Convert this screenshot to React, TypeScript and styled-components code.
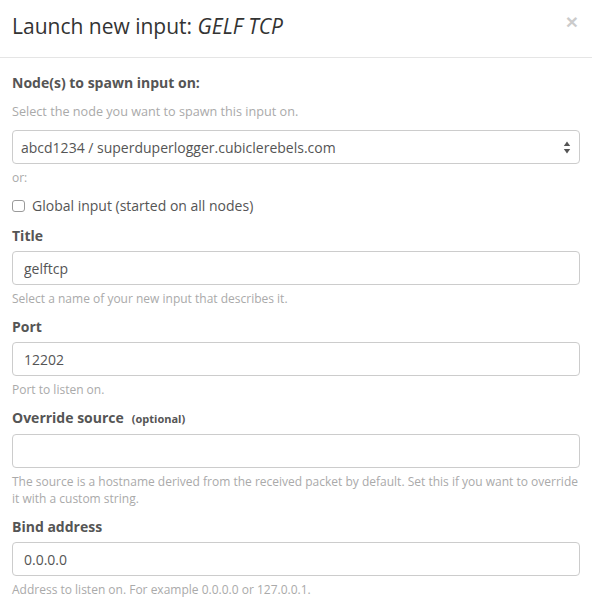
import React from "react";
import styled, { createGlobalStyle } from "styled-components";

const GlobalStyle = createGlobalStyle`
  html, body { margin: 0; padding: 0; background: #fff; }
  body { font-family: "Open Sans", "Noto Sans", sans-serif; color: #555; }
  * { box-sizing: border-box; }
`;

const Modal = styled.div`
  width: 592px;
  background: #fff;
`;

const Header = styled.div`
  display: flex;
  align-items: flex-start;
  justify-content: space-between;
  padding: 11px 12px 15px 12px;
  border-bottom: 1px solid #e5e5e5;
`;

const Title = styled.h4`
  margin: 0;
  font-size: 21px;
  font-weight: 400;
  line-height: 31px;
  color: #333;
  em { font-style: italic; }
`;

const Close = styled.button`
  border: 0;
  background: none;
  padding: 0;
  margin: 0 2px 0 0;
  font-family: "Liberation Sans", Arial, sans-serif;
  font-size: 21px;
  font-weight: 700;
  line-height: 1;
  color: #000;
  opacity: 0.2;
  cursor: pointer;
`;

const Body = styled.form`
  display: flex;
  flex-direction: column;
  gap: 10px;
  padding: 15px 12px 0 12px;
`;

const Field = styled.div`
  display: flex;
  flex-direction: column;
`;

const Label = styled.label`
  font-size: 14px;
  font-weight: 700;
  line-height: 20px;
  margin-bottom: 5px;
  color: #555;
`;

const Optional = styled.small`
  font-size: 11px;
  font-weight: 700;
  margin-left: 8px;
`;

const Help = styled.span<{ $wide?: boolean }>`
  display: block;
  font-size: ${(p) => (p.$wide ? "12.65px" : "12px")};
  line-height: 17px;
  color: #aaa;
  margin-top: 5px;
`;

const TextInput = styled.input`
  height: 34px;
  width: 100%;
  padding: 6px 11px;
  font-family: "Open Sans", sans-serif;
  font-size: 14px;
  color: #555;
  border: 1px solid #ccc;
  border-radius: 4px;
  background: #fff;
  outline: none;
`;

const SelectBox = styled.div`
  height: 34px;
  display: flex;
  align-items: center;
  padding: 0 8px;
  border: 1px solid #ccc;
  border-radius: 4px;
  font-size: 14px;
  color: #555;
  background: #fff;
`;

const SelectValue = styled.span`
  flex: 1;
`;

const CheckRow = styled.label`
  display: flex;
  align-items: center;
  gap: 7px;
  height: 20px;
  font-size: 14px;
  line-height: 20px;
  color: #555;
`;

const Check = styled.input`
  appearance: none;
  margin: 0;
  width: 13px;
  height: 12px;
  border: 1px solid #9a9a9a;
  border-radius: 3px;
  background: #fff;
`;

const Arrows = () => (
  <svg width="8" height="13" viewBox="0 0 8 13">
    <path d="M4 0.5 L7.2 5 L0.8 5 Z" fill="#555" />
    <path d="M4 12.5 L7.2 8 L0.8 8 Z" fill="#555" />
  </svg>
);

export default function App() {
  return (
    <Modal>
      <GlobalStyle />
      <Header>
        <Title>
          Launch new input: <em>GELF TCP</em>
        </Title>
        <Close type="button" aria-label="Close">×</Close>
      </Header>
      <Body>
        <Field>
          <Label>Node(s) to spawn input on:</Label>
          <Help $wide>Select the node you want to spawn this input on.</Help>
        </Field>
        <Field>
          <SelectBox>
            <SelectValue>abcd1234 / superduperlogger.cubiclerebels.com</SelectValue>
            <Arrows />
          </SelectBox>
          <Help>or:</Help>
        </Field>
        <CheckRow>
          <Check type="checkbox" />
          Global input (started on all nodes)
        </CheckRow>
        <Field>
          <Label>Title</Label>
          <TextInput defaultValue="gelftcp" />
          <Help>Select a name of your new input that describes it.</Help>
        </Field>
        <Field>
          <Label>Port</Label>
          <TextInput defaultValue="12202" />
          <Help>Port to listen on.</Help>
        </Field>
        <Field>
          <Label>
            Override source<Optional>(optional)</Optional>
          </Label>
          <TextInput defaultValue="" />
          <Help>
            The source is a hostname derived from the received packet by default. Set this if you want to override
            it with a custom string.
          </Help>
        </Field>
        <Field>
          <Label>Bind address</Label>
          <TextInput defaultValue="0.0.0.0" />
          <Help>Address to listen on. For example 0.0.0.0 or 127.0.0.1.</Help>
        </Field>
      </Body>
    </Modal>
  );
}
